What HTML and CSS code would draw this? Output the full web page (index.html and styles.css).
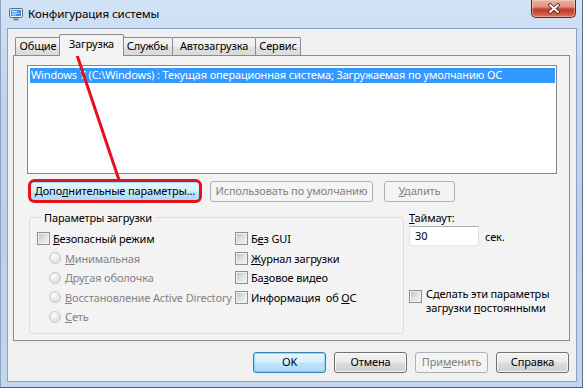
FILE: index.html
```html
<!DOCTYPE html>
<html lang="ru">
<head>
<meta charset="utf-8">
<title>Конфигурация системы</title>
<link rel="stylesheet" href="styles.css">
</head>
<body>
<div class="window">
  <div class="titlebar">
    <svg class="app-icon" viewBox="0 0 16 16" width="16" height="16">
      <rect x="1.5" y="2.5" width="13" height="9" rx="1" fill="#e3e9f0" stroke="#5d6d83"/>
      <rect x="3" y="4" width="10" height="6" fill="#4a8fdc"/>
      <path d="M4 5.5h5M4 7.2h7M4 8.8h4" stroke="#d8ecff" stroke-width="0.9"/>
      <path d="M6 12h4l1.2 2.5H4.8z" fill="#8592a5"/>
    </svg>
    <span class="title">Конфигурация системы</span>
    <div class="close">
      <svg viewBox="0 0 14 11" width="14" height="11">
        <path d="M3 2l8 7M11 2l-8 7" stroke="#4a1a14" stroke-width="3.6" stroke-linecap="round"/>
        <path d="M3 2l8 7M11 2l-8 7" stroke="#ffffff" stroke-width="2" stroke-linecap="round"/>
      </svg>
    </div>
  </div>

  <div class="client">
    <div class="tabs">
      <div class="tab t-general">Общие</div>
      <div class="tab active t-boot">Загрузка</div>
      <div class="tab t-services">Службы</div>
      <div class="tab t-startup">Автозагрузка</div>
      <div class="tab t-tools">Сервис</div>
    </div>

    <div class="panel">
      <div class="listbox">
        <div class="item sel">Windows 7 (C:\Windows) : Текущая операционная система; Загружаемая по умолчанию ОС</div>
      </div>

      <div class="btnrow">
        <div class="btn hot b-adv">Допо<u>л</u>нительные параметры...</div>
        <div class="btn disabled b-def">Использовать по умолчанию</div>
        <div class="btn disabled b-del"><u>У</u>далить</div>
      </div>

      <div class="lower">
        <fieldset class="group">
          <legend>Параметры загрузки</legend>
          <div class="opts">
            <div class="opt"><span class="cb"></span><span><u>Б</u>езопасный режим</span></div>
            <div class="opt"><span class="cb"></span><span>Б<u>е</u>з GUI</span></div>
            <div class="opt sub dis"><span class="rb"></span><span><u>М</u>инимальная</span></div>
            <div class="opt"><span class="cb"></span><span><u>Ж</u>урнал загрузки</span></div>
            <div class="opt sub dis"><span class="rb"></span><span>Дру<u>г</u>ая оболочка</span></div>
            <div class="opt"><span class="cb"></span><span>Ба<u>з</u>овое видео</span></div>
            <div class="opt sub dis"><span class="rb"></span><span><u>В</u>осстановление Active Directory</span></div>
            <div class="opt"><span class="cb"></span><span>Информация&nbsp; об <u>О</u>С</span></div>
            <div class="opt sub dis"><span class="rb"></span><span><u>С</u>еть</span></div>
          </div>
        </fieldset>

        <div class="side">
          <div class="timeout-label"><u>Т</u>аймаут:</div>
          <div class="timeout-row">
            <div class="textbox">30</div>
            <span class="unit">сек.</span>
          </div>
          <div class="perm">
            <span class="cb"></span>
            <span class="perm-text">Сделать эти параметры<br>загрузки <u>п</u>остоянными</span>
          </div>
        </div>
      </div>
    </div>

    <div class="footer">
      <div class="btn default">OK</div>
      <div class="btn">Отмена</div>
      <div class="btn disabled">При<u>м</u>енить</div>
      <div class="btn">Справка</div>
    </div>
  </div>
</div>

<svg class="annot" viewBox="0 0 583 388" width="583" height="388">
  <rect x="61.5" y="37.5" width="59" height="17" rx="4" fill="none" stroke="#e8111b" stroke-width="3"/>
  <line x1="77" y1="55" x2="119" y2="180" stroke="#e8111b" stroke-width="3"/>
  <rect x="29.5" y="180.5" width="171" height="21" rx="5" fill="none" stroke="#e8111b" stroke-width="3"/>
</svg>
</body>
</html>
```

FILE: styles.css
```css
* { box-sizing: border-box; }

html, body {
  margin: 0;
  padding: 0;
}

body {
  width: 583px;
  height: 388px;
  overflow: hidden;
  position: relative;
  font-family: "Noto Sans", "Open Sans", sans-serif;
  font-size: 11px;
  letter-spacing: -0.15px;
  color: #000;
  background: #bcd2ee;
}

u { text-decoration: underline; text-underline-offset: 1px; }

/* ---------- window frame ---------- */
.window {
  width: 583px;
  height: 388px;
  display: flex;
  flex-direction: column;
  background: linear-gradient(180deg, #d3e3f6 0%, #c0d5ef 22%, #bad0ec 60%, #c2d6ef 100%);
  box-shadow: inset -1px 0 #5a6f8d, inset 0 -1px #4c5f7a, inset 1px 0 #8fa3bf;
}

.titlebar {
  height: 28px;
  flex: none;
  display: flex;
  align-items: flex-start;
  padding-left: 8px;
}

.app-icon {
  flex: none;
  margin-top: 6px;
}

.title {
  margin-left: 4px;
  margin-top: 5px;
  font-size: 11.6px;
  letter-spacing: -0.1px;
  line-height: 17px;
  color: #000;
}

.close {
  margin-left: auto;
  margin-right: 7px;
  width: 45px;
  height: 18px;
  border: 1px solid #6b2219;
  border-top: none;
  border-radius: 0 0 5px 5px;
  background: linear-gradient(180deg, #eab0a3 0%, #e09482 40%, #c94530 52%, #c4412b 65%, #dc7661 100%);
  box-shadow: inset 0 0 0 1px rgba(255, 220, 210, 0.45);
  display: flex;
  align-items: center;
  justify-content: center;
}

/* ---------- client area ---------- */
.client {
  flex: 1;
  margin: 0 6px 6px 7px;
  background: #f0f0f0;
  border: 1px solid #8aa0be;
  display: flex;
  flex-direction: column;
}

.tabs {
  display: flex;
  align-items: flex-end;
  height: 21px;
  margin: 5px 0 0 7px;
}

.tab {
  height: 18px;
  border: 1px solid #898c95;
  border-bottom: none;
  border-radius: 2px 2px 0 0;
  background: linear-gradient(180deg, #f4f4f4 0%, #ededed 50%, #e2e2e2 51%, #dadada 100%);
  text-align: center;
  line-height: 16px;
  white-space: nowrap;
}

.tab.active {
  position: relative;
  z-index: 1;
  height: 22px;
  margin: 0 -2px -1px -2px;
  background: #f3f3f3;
  line-height: 18px;
}

.t-general  { width: 46px; }
.t-boot     { width: 65px; }
.t-services { width: 51px; }
.t-startup  { width: 84px; margin-left: -1px; }
.t-tools    { width: 46px; margin-left: -1px; }

.panel {
  flex: none;
  height: 286px;
  margin: 0 6px 0 5px;
  border: 1px solid #898c95;
  background: #f3f3f3;
}

/* ---------- list ---------- */
.listbox {
  margin: 9px 12px 0 13px;
  height: 109px;
  border: 1px solid #828790;
  background: #fff;
  padding: 2px 1px 0 2px;
}

.item {
  height: 15px;
  line-height: 14px;
  padding-left: 1px;
  white-space: nowrap;
  overflow: hidden;
}

.item.sel {
  background: #3399ff;
  color: #fff;
}

/* ---------- buttons ---------- */
.btnrow {
  display: flex;
  margin: 7px 0 0 15px;
}

.btn {
  height: 21px;
  border: 1px solid #707070;
  border-radius: 3px;
  background: linear-gradient(180deg, #f2f2f2 0%, #ebebeb 48%, #dddddd 52%, #cfcfcf 100%);
  box-shadow: inset 0 0 0 1px rgba(255, 255, 255, 0.75);
  text-align: center;
  line-height: 18px;
  white-space: nowrap;
}

.btn.hot,
.btn.default {
  border-color: #3c7fb1;
  background: linear-gradient(180deg, #eaf6fd 0%, #d9f0fc 48%, #bee6fd 52%, #a7d9f5 100%);
  box-shadow: inset 0 0 0 1px rgba(110, 210, 245, 0.7);
}

.btn.disabled {
  border-color: #adb2b5;
  background: #f4f4f4;
  box-shadow: none;
  color: #838383;
}

.b-adv { width: 172px; }
.b-def { width: 163px; margin-left: 9px; }
.b-del { width: 71px; margin-left: 11px; }

/* ---------- boot options ---------- */
.lower {
  display: flex;
  margin: 8px 0 0 15px;
}

.group {
  width: 375px;
  margin: 0;
  padding: 4px 0 6px 7px;
  border: 1px solid #d5dfe5;
  border-radius: 3px;
  min-width: 0;
}

.group legend {
  margin-left: 5px;
  padding: 0 2px;
  line-height: 15px;
}

.opts {
  display: grid;
  grid-template-columns: 198px auto;
  grid-auto-rows: 19.5px;
}

.opt {
  display: flex;
  align-items: center;
  white-space: nowrap;
}

.opt.sub { padding-left: 12px; }
.opt.dis { color: #838383; }

.cb {
  flex: none;
  width: 13px;
  height: 13px;
  margin-right: 3px;
  border: 1px solid #8e8f8f;
  background: linear-gradient(135deg, #b7bcc2 0%, #dfe1e4 50%, #f8f8f8 100%);
  box-shadow: inset 0 0 0 1px #f1f1f1;
}

.rb {
  flex: none;
  width: 12px;
  height: 12px;
  margin-right: 4px;
  border-radius: 50%;
  border: 1px solid #c9c9c9;
  background: radial-gradient(circle at 38% 32%, #ffffff 0%, #eaeaea 45%, #d6d6d6 100%);
}

/* ---------- right side ---------- */
.side {
  margin-left: 5px;
}

.timeout-label {
  line-height: 15px;
}

.timeout-row {
  display: flex;
  align-items: center;
  margin-top: 1px;
}

.textbox {
  width: 70px;
  height: 20px;
  border: 1px solid #dbdfe6;
  border-top-color: #abadb3;
  border-bottom-color: #e3e9ef;
  background: #fff;
  padding-left: 5px;
  line-height: 18px;
}

.unit {
  margin-left: 6px;
}

.perm {
  display: flex;
  align-items: flex-start;
  margin-top: 41px;
}

.perm .cb {
  margin-top: 3px;
  margin-right: 4px;
}

.perm-text {
  line-height: 14px;
}

/* ---------- footer ---------- */
.footer {
  display: flex;
  justify-content: flex-end;
  gap: 8px;
  margin-top: 11px;
  padding-right: 7px;
}

.footer .btn {
  width: 73px;
}

/* ---------- overlays ---------- */
.annot {
  position: absolute;
  left: 0;
  top: 0;
  pointer-events: none;
}
```
